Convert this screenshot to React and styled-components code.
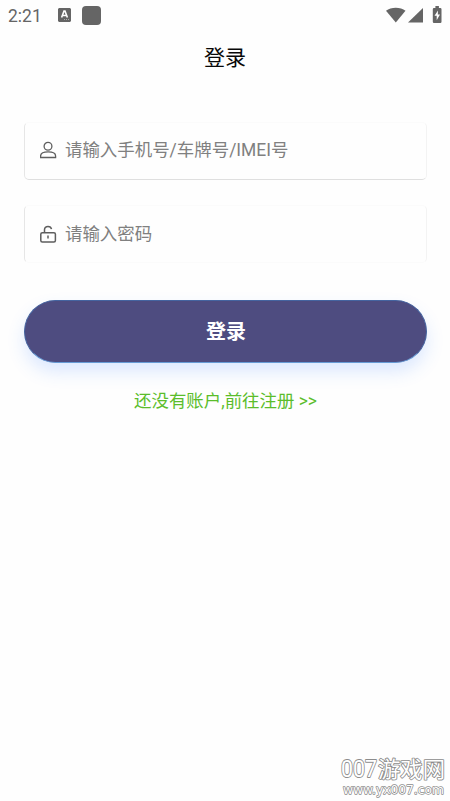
import React from "react";
import styled, { createGlobalStyle } from "styled-components";

const GlobalStyle = createGlobalStyle`
  * {
    box-sizing: border-box;
  }

  body {
    margin: 0;
    background: #fefefe;
    font-family: Roboto, "Noto Sans CJK SC", sans-serif;
  }
`;

const Screen = styled.div`
  display: flex;
  flex-direction: column;
  height: 801px;
`;

const StatusBar = styled.div`
  display: flex;
  align-items: center;
  height: 30px;
  padding: 0 7px 0 8px;
  color: #656565;
`;

const Clock = styled.span`
  width: 50px;
  font-size: 17.5px;
  line-height: 30px;
  padding-top: 2px;
`;

const AppSquare = styled.span`
  width: 19px;
  height: 19px;
  margin-left: 11px;
  border-radius: 4px;
  background: #656565;
`;

const StatusIcons = styled.div`
  display: flex;
  align-items: center;
  margin-left: auto;
`;

const Title = styled.h1`
  margin: 0;
  height: 54px;
  color: #080808;
  font-size: 21px;
  font-weight: 400;
  line-height: 56px;
  text-align: center;
`;

const Form = styled.form`
  display: flex;
  flex-direction: column;
  padding: 38px 23px 0 24px;
`;

const Field = styled.label`
  display: flex;
  align-items: center;
  height: 58px;
  margin-bottom: ${(props) => props.$gap}px;
  padding: 0 14px ${(props) => props.$lift}px 15px;
  border: 1px solid;
  border-color: #fbfbfb #f3f3f3 ${(props) => props.$bottom} #e6e6e6;
  border-radius: 5px;
  color: #5e5e5e;
`;

const Input = styled.input`
  flex: 1;
  min-width: 0;
  margin-left: 8px;
  padding: 0;
  border: 0;
  outline: 0;
  background: transparent;
  font-family: inherit;
  font-size: 17.45px;

  &::placeholder {
    color: #808080;
    opacity: 1;
  }
`;

const Submit = styled.button`
  height: 63px;
  padding: 0 0 3px 1px;
  border: 1px solid #4564a0;
  border-bottom-color: #669bd5;
  border-radius: 32px;
  background: #4e4c80;
  box-shadow: 0 9px 17px rgba(55, 125, 255, 0.17);
  color: #fff;
  font-family: inherit;
  font-size: 20px;
  font-weight: 700;
`;

const RegisterLink = styled.a`
  margin-top: 25px;
  color: #5bbd2b;
  font-size: 17.45px;
  line-height: 26px;
  text-align: center;
`;

const Watermark = styled.svg`
  align-self: flex-end;
  margin-top: auto;
  overflow: visible;
`;

const BadgeIcon = () => (
  <svg width="13" height="14" viewBox="0 0 13 14">
    <path d="M1 0h11L13 1v12L12 14H1L0 13V1z" fill="#656565" />
    <path
      d="M3.600 9.500L6 3h1l2.400 6.500M4.600 7.500h3.800"
      fill="none"
      stroke="#fff"
      strokeWidth="1.6"
    />
    <path d="M6 11.500h5" stroke="#aaa" strokeDasharray="1 1" />
  </svg>
);

const UserIcon = () => (
  <svg width="17" height="18" viewBox="0 0 17 18" fill="none" stroke="currentColor" strokeWidth="1.3">
    <circle cx="8" cy="5.3" r="3.900" />
    <path d="M.6 16.500v-1.600c0-2.400 3-4 7.500-4s7.500 1.600 7.500 4v1.600z" />
  </svg>
);

const LockIcon = () => (
  <svg width="17" height="18" viewBox="0 0 17 18" fill="none" stroke="currentColor" strokeWidth="1.5">
    <rect x=".8" y="7.700" width="14.600" height="9.300" rx="1.500" />
    <path d="M4.500 7.500V4.800c0-2.100 1.400-3.400 3.500-3.400 1.800 0 3.200 1 3.500 2.800M8 10.500v3" />
  </svg>
);

const App = () => (
  <>
    <GlobalStyle />
    <Screen>
      <StatusBar>
        <Clock>2:21</Clock>
        <BadgeIcon />
        <AppSquare />
        <StatusIcons>
          <svg width="57" height="18" viewBox="0 0 57 18" fill="#656565">
            <path d="M0 4.700C5 .7 14.500.7 19.500 4.700L9.800 16.500z" />
            <path d="M37 2v14.500H22z" />
            <path d="M49.400 0h3.500v2h1.400q1.200 0 1.200 1.200v12.600q0 1.200-1.200 1.200H48q-1.200 0-1.200-1.200V3.200Q46.800 2 48 2h1.400z" />
            <path d="M52 4.500l-3.500 5.300h2.200v4.500l3.300-5.700h-2.200z" fill="#fff" />
          </svg>
        </StatusIcons>
      </StatusBar>
      <Title>登录</Title>
      <Form>
        <Field $gap={25} $lift={3} $bottom="#dfdfdf">
          <UserIcon />
          <Input placeholder="请输入手机号/车牌号/IMEI号" />
        </Field>
        <Field $gap={37} $lift={1} $bottom="#fbfbfb">
          <LockIcon />
          <Input type="password" placeholder="请输入密码" />
        </Field>
        <Submit type="button">登录</Submit>
        <RegisterLink>还没有账户,前往注册 &gt;&gt;</RegisterLink>
      </Form>
      <Watermark
        width="112"
        height="50"
        fill="#fff"
        stroke="#8c8c8c"
        strokeLinejoin="round"
        paintOrder="stroke"
      >
        <text x="3" y="26" fontSize="24" strokeWidth="1.8" textLength="36" lengthAdjust="spacingAndGlyphs">
          007
        </text>
        <text x="40" y="26" fontSize="22" strokeWidth="1.7" textLength="67" lengthAdjust="spacingAndGlyphs">
          游戏网
        </text>
        <text x="5" y="43" fontSize="12" strokeWidth="1.4" fontFamily="DejaVu Sans" textLength="101" lengthAdjust="spacingAndGlyphs">
          www.yx007.com
        </text>
      </Watermark>
    </Screen>
  </>
);

export default App;
